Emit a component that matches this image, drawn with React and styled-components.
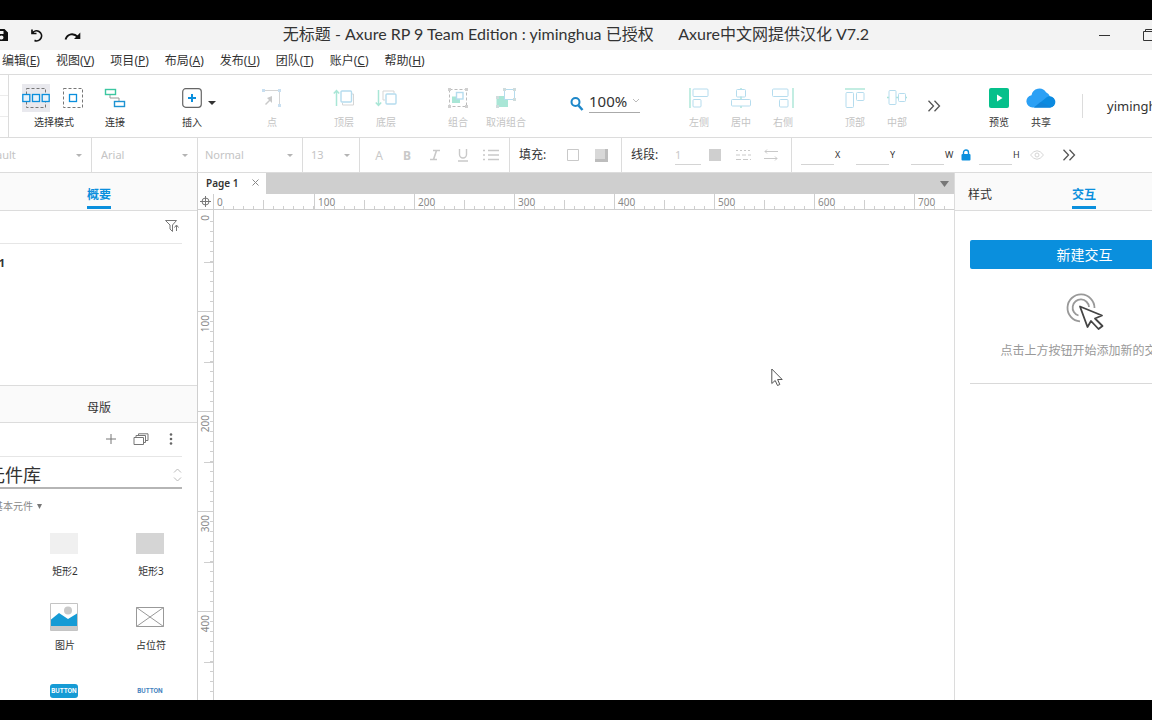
import React from "react";
import styled, { createGlobalStyle, css } from "styled-components";

const line = "#dcdcdc";
const blue = "#0a8fdd";

const GlobalStyle = createGlobalStyle`
  *, *::before, *::after { box-sizing: border-box; }
  body {
    margin: 0;
    background: #000;
    color: #333;
    font-family: "Noto Sans", "Noto Sans CJK SC", sans-serif;
  }
  button, input, select { font: inherit; color: inherit; }
  svg { display: block; flex: none; }
`;

const Stage = styled.div`
  height: 100vh;
  min-height: 480px;
  padding: 20px 0;
  overflow: hidden;
  display: flex;
`;

const Clip = styled.div`
  flex: 1;
  min-width: 0;
  overflow: hidden;
  display: flex;
`;

const Window = styled.div`
  flex: 1;
  min-width: 0;
  margin: 0 -62px 0 -40px;
  background: #fff;
  display: flex;
  flex-direction: column;
`;

const PlainButton = styled.button`
  appearance: none;
  border: 0;
  padding: 0;
  background: none;
  display: flex;
  align-items: center;
  justify-content: center;
`;

/* Title bar */
const TitleBar = styled.header`
  height: 30px;
  flex: none;
  background: #f3f3f3;
  display: grid;
  grid-template-columns: 1fr auto 1fr;
  align-items: center;
`;
const QuickActions = styled.div`
  display: flex;
  align-items: center;
  gap: 19px;
  padding-left: 34px;
  color: #111;
`;
const Title = styled.h1`
  margin: 0 22px 2px 0;
  font-family: Lato, "Noto Sans CJK SC", sans-serif;
  font-size: 16px;
  line-height: 20px;
  font-weight: 400;
  white-space: pre;
`;
const WindowButtons = styled.div`
  display: flex;
  justify-content: flex-end;
  align-items: center;
  gap: 32px;
  padding-right: 59px;
`;

/* Menu bar */
const MenuBar = styled.nav`
  height: 25px;
  flex: none;
  border-bottom: 1px solid ${line};
  display: flex;
  align-items: center;
  gap: 16px;
  padding: 0 0 2px 42px;
`;
const MenuItem = styled(PlainButton)`
  display: block;
  font-size: 12px;
  line-height: 18px;
  white-space: nowrap;
`;

/* Main toolbar */
const Toolbar = styled.div`
  height: 63px;
  flex: none;
  border-bottom: 1px solid ${line};
  display: flex;
`;
const ToolbarStub = styled.div`
  width: 49px;
  border-right: 1px solid ${line};
  display: grid;
  grid-template-rows: 21px 21px 1fr;
  & > div { border-bottom: 1px solid #ececec; }
`;
const ToolGroup = styled.div`
  display: flex;
  margin-left: ${(p) => p.$before}px;
  padding-top: 8px;
`;
const Tool = styled(PlainButton)`
  flex-direction: column;
  justify-content: flex-start;
  width: ${(p) => p.$width || 42}px;
  font-size: 10px;
  line-height: 14px;
  gap: 2px;
  white-space: nowrap;
  &:disabled { color: #c4c4c4; }
`;
const IconSlot = styled.span`
  height: 30px;
  display: flex;
  align-items: center;
  gap: 9px;
`;
const ModeIcon = styled.span`
  width: 28px;
  height: 28px;
  display: grid;
  place-items: center;
  background: ${(p) => (p.$active ? "#e9e9ee" : "transparent")};
`;
const CaretButton = styled(PlainButton)`
  width: 8px;
  height: 40px;
`;
const ZoomBox = styled.label`
  margin: 16px 0 0 37px;
  width: 70px;
  height: 22px;
  display: flex;
  align-items: flex-end;
  gap: 5px;
`;
const ZoomField = styled.span`
  flex: 1;
  min-width: 0;
  height: 22px;
  padding-bottom: 2px;
  border-bottom: 1px solid #aaa;
  display: flex;
  align-items: center;
  color: #bbb;
`;
const ZoomInput = styled.input`
  flex: 1;
  min-width: 0;
  border: 0;
  padding: 0;
  outline: 0;
  background: none;
  font-size: 15px;
  line-height: 20px;
  height: 20px;
  color: #333;
`;
const MoreButton = styled(PlainButton)`
  width: 16px;
  margin-left: ${(p) => p.$before}px;
`;
const Spacer = styled.div`
  flex: 1;
`;
const Account = styled(PlainButton)`
  width: 132px;
  height: 24px;
  margin: 19px 0 0 20px;
  padding-left: 24px;
  border-left: 1px solid ${line};
  justify-content: flex-start;
  font-size: 13px;
  line-height: 18px;
`;

/* Format bar */
const FormatBar = styled.div`
  height: 35px;
  flex: none;
  border-bottom: 1px solid ${line};
  display: flex;
`;
const SelectCell = styled.div`
  width: ${(p) => p.$width}px;
  flex: none;
  border-right: 1px solid ${line};
  padding: 0 9px 0 ${(p) => p.$pad || 8}px;
  display: flex;
  align-items: center;
  color: #b4b4b4;
`;
const FormatSelect = styled.select`
  appearance: none;
  flex: 1;
  min-width: 0;
  border: 0;
  padding: 0;
  background: none;
  outline: 0;
  font-size: 11px;
  line-height: 16px;
  color: #c4c4c4;
`;
const FormatGroup = styled.div`
  width: ${(p) => (p.$width ? `${p.$width}px` : "auto")};
  flex: none;
  border-right: ${(p) => (p.$last ? 0 : 1)}px solid ${line};
  padding-left: ${(p) => p.$pad}px;
  display: flex;
  align-items: center;
  color: #c9c9c9;
`;
const FormatButton = styled(PlainButton)`
  width: 28px;
  height: 24px;
  font-size: 12px;
`;
const GroupLabel = styled.label`
  color: #333;
  font-size: 12px;
  line-height: 18px;
  width: ${(p) => p.$width || 40}px;
  white-space: nowrap;
`;
const LineInput = styled.input`
  width: ${(p) => p.$width}px;
  height: 19px;
  border: 0;
  border-bottom: 1px solid #d4d4d4;
  padding: 0;
  outline: 0;
  background: none;
  font-size: 11px;
  line-height: 16px;
  color: #c9c9c9;
`;
const Coordinate = styled.label`
  display: flex;
  align-items: center;
  width: ${(p) => (p.$tight ? 50 : 55)}px;
  font-size: 9px;
  line-height: 12px;
  color: #333;
  gap: 1px;
`;
const LockButton = styled(PlainButton)`
  width: 18px;
  justify-content: flex-start;
`;

/* Work area */
const Body = styled.div`
  flex: 1;
  min-height: 0;
  display: flex;
`;
const SidePanel = styled.aside`
  width: ${(p) => p.$width}px;
  flex: none;
  display: flex;
  flex-direction: column;
  overflow: hidden;
`;
const PanelHeader = styled.div`
  height: 38px;
  flex: none;
  background: #fafafa;
  border-top: ${(p) => (p.$ruled ? 1 : 0)}px solid ${line};
  border-bottom: 1px solid ${line};
  display: flex;
  padding-left: ${(p) => p.$pad}px;
`;
const PanelTab = styled(PlainButton)`
  height: 36px;
  padding-top: 10px;
  margin-right: 80px;
  font-size: 12px;
  line-height: 23px;
  align-items: flex-start;
  border-bottom: 3px solid transparent;
  ${(p) =>
    p.$active &&
    css`
      color: ${blue};
      font-weight: 700;
      border-color: ${blue};
    `}
`;
const PanelRow = styled.div`
  height: ${(p) => p.$height}px;
  flex: none;
  margin: 0 15px;
  padding-bottom: 2px;
  border-bottom: 1px solid #e6e6e6;
  display: flex;
  align-items: center;
  justify-content: flex-end;
  gap: 15px;
  color: #777;
`;
const OutlineTree = styled.div`
  height: 141px;
  flex: none;
  padding: 10px 0 0 9px;
  font-size: 11px;
  line-height: 18px;
  font-weight: 700;
`;
const LibraryPicker = styled.div`
  height: 32px;
  flex: none;
  margin: 0 15px;
  padding-top: 5px;
  border-bottom: 2px solid #b5b5b5;
  display: flex;
  align-items: center;
  color: #bbb;
`;
const LibrarySelect = styled.select`
  appearance: none;
  flex: 1;
  min-width: 0;
  border: 0;
  outline: 0;
  padding: 0 0 0 12px;
  background: none;
  font-size: 18px;
  line-height: 24px;
  color: #333;
`;
const LibrarySection = styled(PlainButton)`
  margin: 9px 0 0 33px;
  justify-content: flex-start;
  gap: 4px;
  font-size: 10px;
  line-height: 16px;
  color: #888;
`;
const LibraryGrid = styled.div`
  margin: 13px 0 0 61px;
  display: grid;
  grid-template-columns: 86px 86px;
  grid-auto-rows: 74px;
`;
const LibraryItem = styled.figure`
  margin: 0;
  display: flex;
  flex-direction: column;
  align-items: center;
`;
const Preview = styled.div`
  height: 32px;
  display: flex;
  align-items: center;
`;
const ItemName = styled.figcaption`
  margin-top: 5px;
  padding-left: 2px;
  font-size: 10px;
  line-height: 14px;
`;
const Swatch = styled.div`
  width: 28px;
  height: 21px;
  background: ${(p) => p.$color};
`;
const ButtonSample = styled.div`
  width: 28px;
  height: 14px;
  border-radius: 3px;
  background: ${(p) => (p.$primary ? "#169bd5" : "transparent")};
  color: ${(p) => (p.$primary ? "#fff" : "#3f7fbd")};
  font: 700 6px/14px Inter, sans-serif;
  text-align: center;
`;

/* Canvas */
const Center = styled.main`
  flex: 1;
  min-width: 0;
  border-left: 1px solid #cfcfcf;
  border-right: 1px solid ${line};
  display: flex;
  flex-direction: column;
  overflow: hidden;
`;
const PageTabs = styled.div`
  height: 21px;
  flex: none;
  background: #cfcfcf;
  display: flex;
  justify-content: space-between;
  padding-right: 5px;
`;
const PageTab = styled.div`
  width: 68px;
  background: #fff;
  display: flex;
  align-items: center;
  justify-content: space-between;
  padding: 0 7px 2px 8px;
  font-size: 10px;
  line-height: 16px;
  font-weight: 600;
  color: #333;
`;
const RulerRow = styled.div`
  height: 16px;
  flex: none;
  border-bottom: 1px solid #cfcfcf;
  display: flex;
  overflow: hidden;
`;
const RulerCorner = styled.div`
  width: 16px;
  flex: none;
  border-right: 1px solid #cfcfcf;
  display: grid;
  place-items: center;
`;
const HorizontalMark = styled.div`
  width: 100px;
  flex: none;
  padding-left: 3px;
  border-left: ${(p) => (p.$first ? 0 : 1)}px solid #cfcfcf;
  font-size: 10px;
  line-height: 17px;
  color: #888;
  background:
    linear-gradient(#cfcfcf, #cfcfcf) 49px 100% / 1px 9px no-repeat,
    repeating-linear-gradient(90deg, transparent 0 9px, #cfcfcf 9px 10px) 0 100% / 100% 3px no-repeat;
`;
const CanvasRow = styled.div`
  flex: 1;
  min-height: 0;
  display: flex;
`;
const VerticalRuler = styled.div`
  width: 16px;
  flex: none;
  padding-top: 2px;
  border-right: 1px solid #cfcfcf;
  overflow: hidden;
`;
const VerticalMark = styled.div`
  height: 100px;
  border-bottom: 1px solid #cfcfcf;
  display: flex;
  background:
    linear-gradient(#cfcfcf, #cfcfcf) 100% 50px / 9px 1px no-repeat,
    repeating-linear-gradient(180deg, transparent 0 9px, #cfcfcf 9px 10px) 100% 0 / 3px 100% no-repeat;
`;
const VerticalNumber = styled.span`
  height: max-content;
  margin-top: 3px;
  writing-mode: vertical-rl;
  transform: rotate(180deg);
  font-size: 10px;
  line-height: 15px;
  color: #888;
`;
const Canvas = styled.div`
  flex: 1;
  position: relative;
`;
const Pointer = styled.div`
  position: absolute;
  left: 557px;
  top: 158px;
`;

/* Interaction panel */
const Interactions = styled.div`
  margin: 29px 15px 0;
  padding-bottom: 23px;
  border-bottom: 1px solid #d9d9d9;
  display: flex;
  flex-direction: column;
  align-items: center;
`;
const PrimaryButton = styled(PlainButton)`
  width: 100%;
  height: 29px;
  padding-bottom: 2px;
  border-radius: 2px;
  background: ${blue};
  color: #fff;
  font-size: 14px;
  margin-bottom: 24px;
`;
const Hint = styled.p`
  margin: 11px 0 0;
  font-size: 12px;
  line-height: 18px;
  color: #999;
  white-space: nowrap;
`;

const Svg = ({ w = 20, h = w, children, ...rest }) => (
  <svg width={w} height={h} viewBox={`0 0 ${w} ${h}`} fill="none" stroke="currentColor" aria-hidden="true" {...rest}>
    {children}
  </svg>
);

const Caret = ({ w = 7, h = 4, color = "currentColor" }) => (
  <Svg w={w} h={h} stroke="none">
    <path d={`M0 0h${w}L${w / 2} ${h}z`} fill={color} />
  </Svg>
);

const DoubleChevron = () => (
  <Svg w={14} h={12} stroke="#555" strokeWidth="1.3">
    <path d="M1.5 .8 6.5 6l-5 5.2M7.5 .8l5 5.2-5 5.2" />
  </Svg>
);

const pale = "#b5dcee";
const paleGreen = "#a9e6d6";

const icons = {
  connect: (
    <Svg w={22} h={20}>
      <path d="M6 7v3h9v3" stroke="#999" />
      <rect x="1.5" y="1.5" width="10" height="5" stroke="#3cc7a1" strokeWidth="1.4" />
      <rect x="10.5" y="13.5" width="10" height="5" stroke="#1d93d2" strokeWidth="1.4" />
    </Svg>
  ),
  insert: (
    <Svg>
      <rect x=".7" y=".7" width="18.6" height="18.6" rx="3" stroke="#666" strokeWidth="1.2" />
      <path d="M10 6v8M6 10h8" stroke={blue} strokeWidth="2" />
    </Svg>
  ),
  point: (
    <Svg>
      <path d="M2 2.5h15.5V18" stroke="#d5d5d5" />
      <path d="M0 1h3v3H0zM16 1h3v3h-3zM16 16h3v3h-3z" fill="#c9dff0" stroke="none" />
      <path d="M10 8v7l-2-2-4 4-1-1 4-4-2-2z" fill="#c9c9c9" stroke="none" />
    </Svg>
  ),
  front: (
    <Svg w={22} h={20}>
      <path d="M3.5 18V2.5M.8 5.5l2.7-3 2.7 3" stroke={paleGreen} strokeWidth="1.5" />
      <path d="M18.5 6h2v11h-11v-2" stroke="#d5d5d5" />
      <rect x="8" y="3" width="10.5" height="11" rx="1" stroke={pale} strokeWidth="1.4" />
    </Svg>
  ),
  back: (
    <Svg w={22} h={20}>
      <path d="M3.5 2v15.5M.8 14.5l2.7 3 2.7-3" stroke={paleGreen} strokeWidth="1.5" />
      <path d="M10 12H8V3h11v2" stroke="#d5d5d5" />
      <rect x="11" y="6" width="10" height="10" rx="1" stroke={pale} strokeWidth="1.4" />
    </Svg>
  ),
  group: (
    <Svg>
      <rect x="1.5" y="1.5" width="17" height="17" stroke="#bbb" strokeDasharray="3 2" />
      <path d="M0 0h3v3H0zM17 0h3v3h-3zM0 17h3v3H0zM17 17h3v3h-3z" fill="#d0d0d0" stroke="none" />
      <rect x="4" y="8.5" width="8" height="6.5" fill={paleGreen} stroke="none" />
      <rect x="8.5" y="4.5" width="6.5" height="6.5" fill="#fff" stroke={pale} strokeWidth="1.4" />
    </Svg>
  ),
  ungroup: (
    <Svg>
      <rect x=".5" y="8" width="11.5" height="11" fill={paleGreen} stroke="none" />
      <rect x="8.5" y="1.5" width="10" height="10" fill="#fff" stroke={pale} />
      <path d="M7 0h3v3H7zM17 0h3v3h-3zM17 10h3v3h-3zM0 17h3v3H0zM0 8h3v3H0z" fill="#cfdcdc" stroke="none" />
    </Svg>
  ),
  left: (
    <Svg>
      <path d="M1 0v20" stroke={paleGreen} strokeWidth="1.4" />
      <rect x="4" y="1" width="15" height="7.5" rx="1" stroke={pale} />
      <rect x="4" y="11.5" width="8" height="7.5" rx="1" stroke={pale} />
    </Svg>
  ),
  center: (
    <Svg>
      <path d="M10 0v2M10 8.5v3M10 18v2" stroke={paleGreen} strokeWidth="1.4" />
      <rect x="5.5" y="1.5" width="9" height="7.5" rx="1" stroke={pale} />
      <rect x=".5" y="11.5" width="19" height="6.5" rx="1" stroke={pale} />
    </Svg>
  ),
  right: (
    <Svg w={22} h={20}>
      <path d="M21 0v20" stroke={paleGreen} strokeWidth="1.4" />
      <rect x=".5" y="1" width="15.5" height="7.5" rx="1" stroke={pale} />
      <rect x="7.5" y="11.5" width="8.5" height="7.5" rx="1" stroke={pale} />
    </Svg>
  ),
  top: (
    <Svg>
      <path d="M0 1h20" stroke={paleGreen} strokeWidth="1.4" />
      <rect x="1" y="4.5" width="7.5" height="15" rx="1" stroke={pale} />
      <rect x="11.5" y="4.5" width="7.5" height="8" rx="1" stroke={pale} />
    </Svg>
  ),
  middle: (
    <Svg>
      <path d="M0 9.5h2M9 9.5h3M18 9.5h2" stroke={paleGreen} strokeWidth="1.4" />
      <rect x="2" y="2.5" width="7" height="14" rx="1" stroke={pale} />
      <rect x="11.5" y="5.5" width="7" height="8" rx="1" stroke={pale} />
    </Svg>
  ),
  preview: (
    <Svg stroke="none">
      <rect width="20" height="20" rx="2" fill="#05c08b" />
      <path d="M8 6.5v7l5.5-3.5z" fill="#fff" />
    </Svg>
  ),
  share: (
    <Svg w={30} h={20} stroke="none">
      <path d="M6.5 19.5A6.2 6.2 0 0 1 5.500 7.200 8 8 0 0 1 20 4.200 7.500 7.500 0 0 1 24 8.500 5.600 5.600 0 0 1 24 19.500z" fill="#2ba0f5" />
      <path d="M8 19.500 21 9A5.600 5.600 0 1 1 24 19.500z" fill="#0b8ae0" />
      <path d="M8 19.500 14.500 14l11 5.500z" fill="#1680d4" opacity=".6" />
    </Svg>
  ),
};

const toolGroups = [
  { before: 35, tools: [["点", "point"]] },
  { before: 30, tools: [["顶层", "front"], ["底层", "back"]] },
  { before: 30, tools: [["组合", "group"], ["取消组合", "ungroup", 54]] },
];
const alignGroups = [
  { before: 38, tools: [["左侧", "left"], ["居中", "center"], ["右侧", "right"]] },
  { before: 30, tools: [["顶部", "top"], ["中部", "middle"]] },
];

const renderGroup = ({ before, tools }) => (
  <ToolGroup key={tools[0][0]} $before={before}>
    {tools.map(([name, icon, width]) => (
      <Tool key={name} $width={width} disabled>
        <IconSlot>{icons[icon]}</IconSlot>
        {name}
      </Tool>
    ))}
  </ToolGroup>
);

const menus = [
  ["编辑", "E"], ["视图", "V"], ["项目", "P"], ["布局", "A"],
  ["发布", "U"], ["团队", "T"], ["账户", "C"], ["帮助", "H"],
];

const FormatPicker = ({ label, value, width, pad }) => (
  <SelectCell $width={width} $pad={pad}>
    <FormatSelect aria-label={label} defaultValue={value}>
      <option>{value}</option>
    </FormatSelect>
    <Caret w={6} h={3} />
  </SelectCell>
);

export default function App() {
  return (
    <Stage>
      <GlobalStyle />
      <Clip>
        <Window>
          <TitleBar>
            <QuickActions>
              <PlainButton aria-label="保存">
                <Svg w={14} stroke="none">
                  <path fillRule="evenodd" d="M1 1h9.5L14 4.5V13H1zM3 3v3h6.5V3zM7.5 7.5a2 2 0 1 0 0 4 2 2 0 0 0 0-4z" fill="#111" />
                </Svg>
              </PlainButton>
              <PlainButton aria-label="撤销">
                <Svg w={18} h={14} strokeWidth="1.7">
                  <path d="M5 1.500v4h4.500M5.300 5.200a5 5 0 1 1 2.200 7.200" />
                </Svg>
              </PlainButton>
              <PlainButton aria-label="重做">
                <Svg w={18} h={14} strokeWidth="1.9">
                  <path d="M1.500 11.500C3.500 5.500 9.500 4.500 14 9" />
                  <path d="M16.300 4.500V11H10z" fill="#111" stroke="none" />
                </Svg>
              </PlainButton>
            </QuickActions>
            <Title>{"无标题 - Axure RP 9 Team Edition : yiminghua 已授权      Axure中文网提供汉化 V7.2"}</Title>
            <WindowButtons>
              <PlainButton aria-label="最小化">
                <Svg w={12} h={12} stroke="#333"><path d="M0 6.5h11" /></Svg>
              </PlainButton>
              <PlainButton aria-label="最大化">
                <Svg w={12} h={12} stroke="#333"><path d="M.5 2.500h9v9h-9zM2.500 2.500v-2h9v9h-2" /></Svg>
              </PlainButton>
            </WindowButtons>
          </TitleBar>

          <MenuBar>
            {menus.map(([name, key]) => (
              <MenuItem key={key}>
                {name}(<u>{key}</u>)
              </MenuItem>
            ))}
          </MenuBar>

          <Toolbar>
            <ToolbarStub>
              <div />
              <div />
            </ToolbarStub>
            <ToolGroup $before={12}>
              <Tool $width={66}>
                <IconSlot>
                  <ModeIcon $active>
                    <Svg w={28}>
                      <rect x="4.5" y="4.5" width="19" height="19" stroke="#777" strokeDasharray="3 2" />
                      <g fill="#e9f2fa" stroke={blue} strokeWidth="1.3">
                        <rect x=".8" y="10.5" width="7" height="7" />
                        <rect x="10.5" y="10.5" width="7" height="7" />
                        <rect x="20.2" y="10.5" width="7" height="7" />
                      </g>
                    </Svg>
                  </ModeIcon>
                  <ModeIcon>
                    <Svg w={28}>
                      <rect x="4.5" y="4.5" width="19" height="19" stroke="#777" strokeDasharray="3 2" />
                      <rect x="10.5" y="10.5" width="7" height="7" stroke={blue} strokeWidth="1.3" />
                    </Svg>
                  </ModeIcon>
                </IconSlot>
                选择模式
              </Tool>
            </ToolGroup>
            <ToolGroup $before={7}>
              <Tool>
                <IconSlot>{icons.connect}</IconSlot>
                连接
              </Tool>
            </ToolGroup>
            <ToolGroup $before={40}>
              <Tool $width={32}>
                <IconSlot>{icons.insert}</IconSlot>
                插入
              </Tool>
              <CaretButton aria-label="插入选项">
                <Caret w={8} h={4} color="#333" />
              </CaretButton>
            </ToolGroup>
            {toolGroups.map(renderGroup)}
            <ZoomBox>
              <Svg w={14} h={16} stroke="#1d87c9" strokeWidth="2">
                <circle cx="5.5" cy="5" r="4" />
                <path d="m8.5 8.5 4 4.5" strokeWidth="2.5" />
              </Svg>
              <ZoomField>
                <ZoomInput aria-label="缩放" defaultValue="100%" />
                <Svg w={8} h={5}><path d="m1 1 3 3 3-3" /></Svg>
              </ZoomField>
            </ZoomBox>
            {alignGroups.map(renderGroup)}
            <MoreButton $before={8} aria-label="更多工具"><DoubleChevron /></MoreButton>
            <Spacer />
            <ToolGroup $before={0}>
              <Tool>
                <IconSlot>{icons.preview}</IconSlot>
                预览
              </Tool>
              <Tool>
                <IconSlot>{icons.share}</IconSlot>
                共享
              </Tool>
            </ToolGroup>
            <Account>yiminghua</Account>
          </Toolbar>

          <FormatBar>
            <FormatPicker label="样式" value="Default" width={132} pad={18} />
            <FormatPicker label="字体" value="Arial" width={106} pad={9} />
            <FormatPicker label="字重" value="Normal" width={105} pad={7} />
            <FormatPicker label="字号" value="13" width={57} />
            <FormatGroup $width={150} $pad={5}>
              <FormatButton aria-label="文字颜色">A</FormatButton>
              <FormatButton aria-label="加粗"><b>B</b></FormatButton>
              <FormatButton aria-label="斜体">
                <Svg w={12} strokeWidth="1.6"><path d="M4 1.500h7M1 10.500h7M7.500 1.500l-3 9" /></Svg>
              </FormatButton>
              <FormatButton aria-label="下划线">
                <Svg w={12} h={13} strokeWidth="1.4"><path d="M2.500 0v5.500a3.500 3.500 0 0 0 7 0V0M1 12h10" /></Svg>
              </FormatButton>
              <FormatButton aria-label="项目符号">
                <Svg w={16} h={12} strokeWidth="1.4"><path d="M0 1.500h2M0 6h2M0 10.500h2M5 1.500h11M5 6h11M5 10.500h11" /></Svg>
              </FormatButton>
            </FormatGroup>
            <FormatGroup $width={112} $pad={9}>
              <GroupLabel as="span">填充:</GroupLabel>
              <FormatButton aria-label="填充颜色">
                <Svg w={12}><path d="M.5 .5h11v11H.5z" /></Svg>
              </FormatButton>
              <FormatButton aria-label="阴影">
                <Svg w={13} stroke="none">
                  <path d="M0 0h13v13H0z" fill="#bdbdbd" />
                  <path d="M0 0h10v10H0z" fill="#d8d8d8" />
                </Svg>
              </FormatButton>
            </FormatGroup>
            <FormatGroup $width={170} $pad={9}>
              <GroupLabel htmlFor="line-width" $width={44}>线段:</GroupLabel>
              <LineInput id="line-width" $width={26} defaultValue="1" />
              <FormatButton aria-label="线段颜色">
                <Svg w={12} stroke="none"><path d="M0 0h12v12H0z" fill="#cfcfcf" /></Svg>
              </FormatButton>
              <FormatButton aria-label="线段类型">
                <Svg w={15} h={12}>
                  <path d="M0 1.500h15" strokeDasharray="2 2" />
                  <path d="M0 6h15" strokeDasharray="4 2" />
                  <path d="M0 10.500h15" strokeDasharray="5 2" />
                </Svg>
              </FormatButton>
              <FormatButton aria-label="箭头样式">
                <Svg w={14} h={12}><path d="M14 2.500H1M3 .5l-2 2 2 2M0 9.500h13M11 7.500l2 2-2 2" /></Svg>
              </FormatButton>
            </FormatGroup>
            <FormatGroup $last $pad={9}>
              <Coordinate><LineInput $width={33} />X</Coordinate>
              <Coordinate><LineInput $width={33} />Y</Coordinate>
              <Coordinate $tight><LineInput $width={33} />W</Coordinate>
              <LockButton aria-label="锁定比例">
                <Svg w={12} h={12} stroke={blue}>
                  <path d="M2.500 5V3.500a2.500 2.500 0 0 1 5 0V5" strokeWidth="1.4" />
                  <rect x=".5" y="5" width="9" height="6.5" rx="1" fill={blue} stroke="none" />
                </Svg>
              </LockButton>
              <Coordinate $tight><LineInput $width={33} />H</Coordinate>
              <PlainButton aria-label="可见性">
                <Svg w={16} h={10} stroke="#d5d5d5">
                  <path d="M1.500 5Q8-3.500 14.500 5 8 13.500 1.500 5z" />
                  <circle cx="8" cy="5" r="2" />
                </Svg>
              </PlainButton>
              <MoreButton $before={16} aria-label="更多格式"><DoubleChevron /></MoreButton>
            </FormatGroup>
          </FormatBar>

          <Body>
            <SidePanel $width={237}>
              <PanelHeader $pad={127}>
                <PanelTab $active>概要</PanelTab>
              </PanelHeader>
              <PanelRow $height={33}>
                <PlainButton aria-label="筛选">
                  <Svg w={18} h={14}>
                    <path d="M1.500 1.500h11L8.500 6v6.500L6 10V6zM12.500 12V6.500M10.500 8.500l2-2.500 2 2.500" />
                  </Svg>
                </PlainButton>
              </PanelRow>
              <OutlineTree>Page 1</OutlineTree>
              <PanelHeader $ruled $pad={127}>
                <PanelTab>母版</PanelTab>
              </PanelHeader>
              <PanelRow $height={34}>
                <PlainButton aria-label="添加">
                  <Svg w={14}><path d="M7 2v10M2 7h10" /></Svg>
                </PlainButton>
                <PlainButton aria-label="管理元件库">
                  <Svg w={16} h={12}>
                    <path d="M1 4.500h9.500v7H1zM3 4.500v-2h9.500v7H11M5.500 2V.8h9.500V7.500h-2" />
                  </Svg>
                </PlainButton>
                <PlainButton aria-label="更多">
                  <Svg w={18} h={14} stroke="none" fill="#666">
                    <circle cx="7" cy="2.5" r="1.3" /><circle cx="7" cy="7" r="1.3" /><circle cx="7" cy="11.5" r="1.3" />
                  </Svg>
                </PlainButton>
              </PanelRow>
              <LibraryPicker>
                <LibrarySelect aria-label="元件库" defaultValue="元件库">
                  <option>元件库</option>
                </LibrarySelect>
                <Svg w={9} h={14}><path d="m1 4.500 3.500-3.500L8 4.500M1 9.500 4.500 13 8 9.500" /></Svg>
              </LibraryPicker>
              <LibrarySection>
                基本元件 <Caret w={5} h={5} color="#777" />
              </LibrarySection>
              <LibraryGrid>
                <LibraryItem>
                  <Preview><Swatch $color="#f0f0f0" /></Preview>
                  <ItemName>矩形2</ItemName>
                </LibraryItem>
                <LibraryItem>
                  <Preview><Swatch $color="#d5d5d5" /></Preview>
                  <ItemName>矩形3</ItemName>
                </LibraryItem>
                <LibraryItem>
                  <Preview>
                    <Svg w={28}>
                      <path d="M.5 .5h27v27H.5z" stroke="#c4c4c4" />
                      <path d="M1 23h26v4H1z" fill="#c9c9c9" stroke="none" />
                      <circle cx="18" cy="7.5" r="4" fill="#c9c9c9" stroke="none" />
                      <path d="M1 16.500 9 10l9 6 9-5.500V23H1z" fill="#169bd5" stroke="none" />
                    </Svg>
                  </Preview>
                  <ItemName>图片</ItemName>
                </LibraryItem>
                <LibraryItem>
                  <Preview>
                    <Svg w={28} h={20} stroke="#999"><path d="M.5 .5h27v19H.5zl27 19M27.500 .5l-27 19" /></Svg>
                  </Preview>
                  <ItemName>占位符</ItemName>
                </LibraryItem>
                <LibraryItem>
                  <Preview><ButtonSample $primary>BUTTON</ButtonSample></Preview>
                </LibraryItem>
                <LibraryItem>
                  <Preview><ButtonSample>BUTTON</ButtonSample></Preview>
                </LibraryItem>
              </LibraryGrid>
            </SidePanel>

            <Center>
              <PageTabs>
                <PageTab>
                  Page 1
                  <PlainButton aria-label="关闭">
                    <Svg w={7} stroke="#888"><path d="m.5 .5 6 6M6.500 .5l-6 6" /></Svg>
                  </PlainButton>
                </PageTab>
                <PlainButton aria-label="页面列表"><Caret w={9} h={6} color="#777" /></PlainButton>
              </PageTabs>
              <RulerRow>
                <RulerCorner>
                  <Svg w={11} stroke="#777"><circle cx="5.5" cy="5.5" r="3.5" /><path d="M5.500 0v11M0 5.500h11" /></Svg>
                </RulerCorner>
                {Array.from({ length: 8 }, (_, i) => (
                  <HorizontalMark key={i} $first={i === 0}>{i * 100}</HorizontalMark>
                ))}
              </RulerRow>
              <CanvasRow>
                <VerticalRuler>
                  {Array.from({ length: 5 }, (_, i) => (
                    <VerticalMark key={i}>
                      <VerticalNumber>{i * 100}</VerticalNumber>
                    </VerticalMark>
                  ))}
                </VerticalRuler>
                <Canvas>
                  <Pointer>
                    <Svg w={13} h={19} stroke="#555">
                      <path d="M.8 1v14.500l3.400-3 2.300 5 2.300-1-2.200-5h4.600z" fill="#fff" />
                    </Svg>
                  </Pointer>
                </Canvas>
              </CanvasRow>
            </Center>

            <SidePanel $width={259}>
              <PanelHeader $pad={13}>
                <PanelTab>样式</PanelTab>
                <PanelTab $active>交互</PanelTab>
              </PanelHeader>
              <Interactions>
                <PrimaryButton>新建交互</PrimaryButton>
                <Svg w={38} h={38} strokeWidth="1.8">
                  <path d="M28.500 15A13.500 13.500 0 1 0 14 28.400M23 14A8.200 8.200 0 1 0 12.500 22.500" stroke="#999" />
                  <path d="M14 13.500 21.500 34l3.500-6 7.500 8 4-3-7.500-7.500 7-3z" fill="#fff" stroke="#444" strokeLinejoin="round" />
                </Svg>
                <Hint>点击上方按钮开始添加新的交互</Hint>
              </Interactions>
            </SidePanel>
          </Body>
        </Window>
      </Clip>
    </Stage>
  );
}
